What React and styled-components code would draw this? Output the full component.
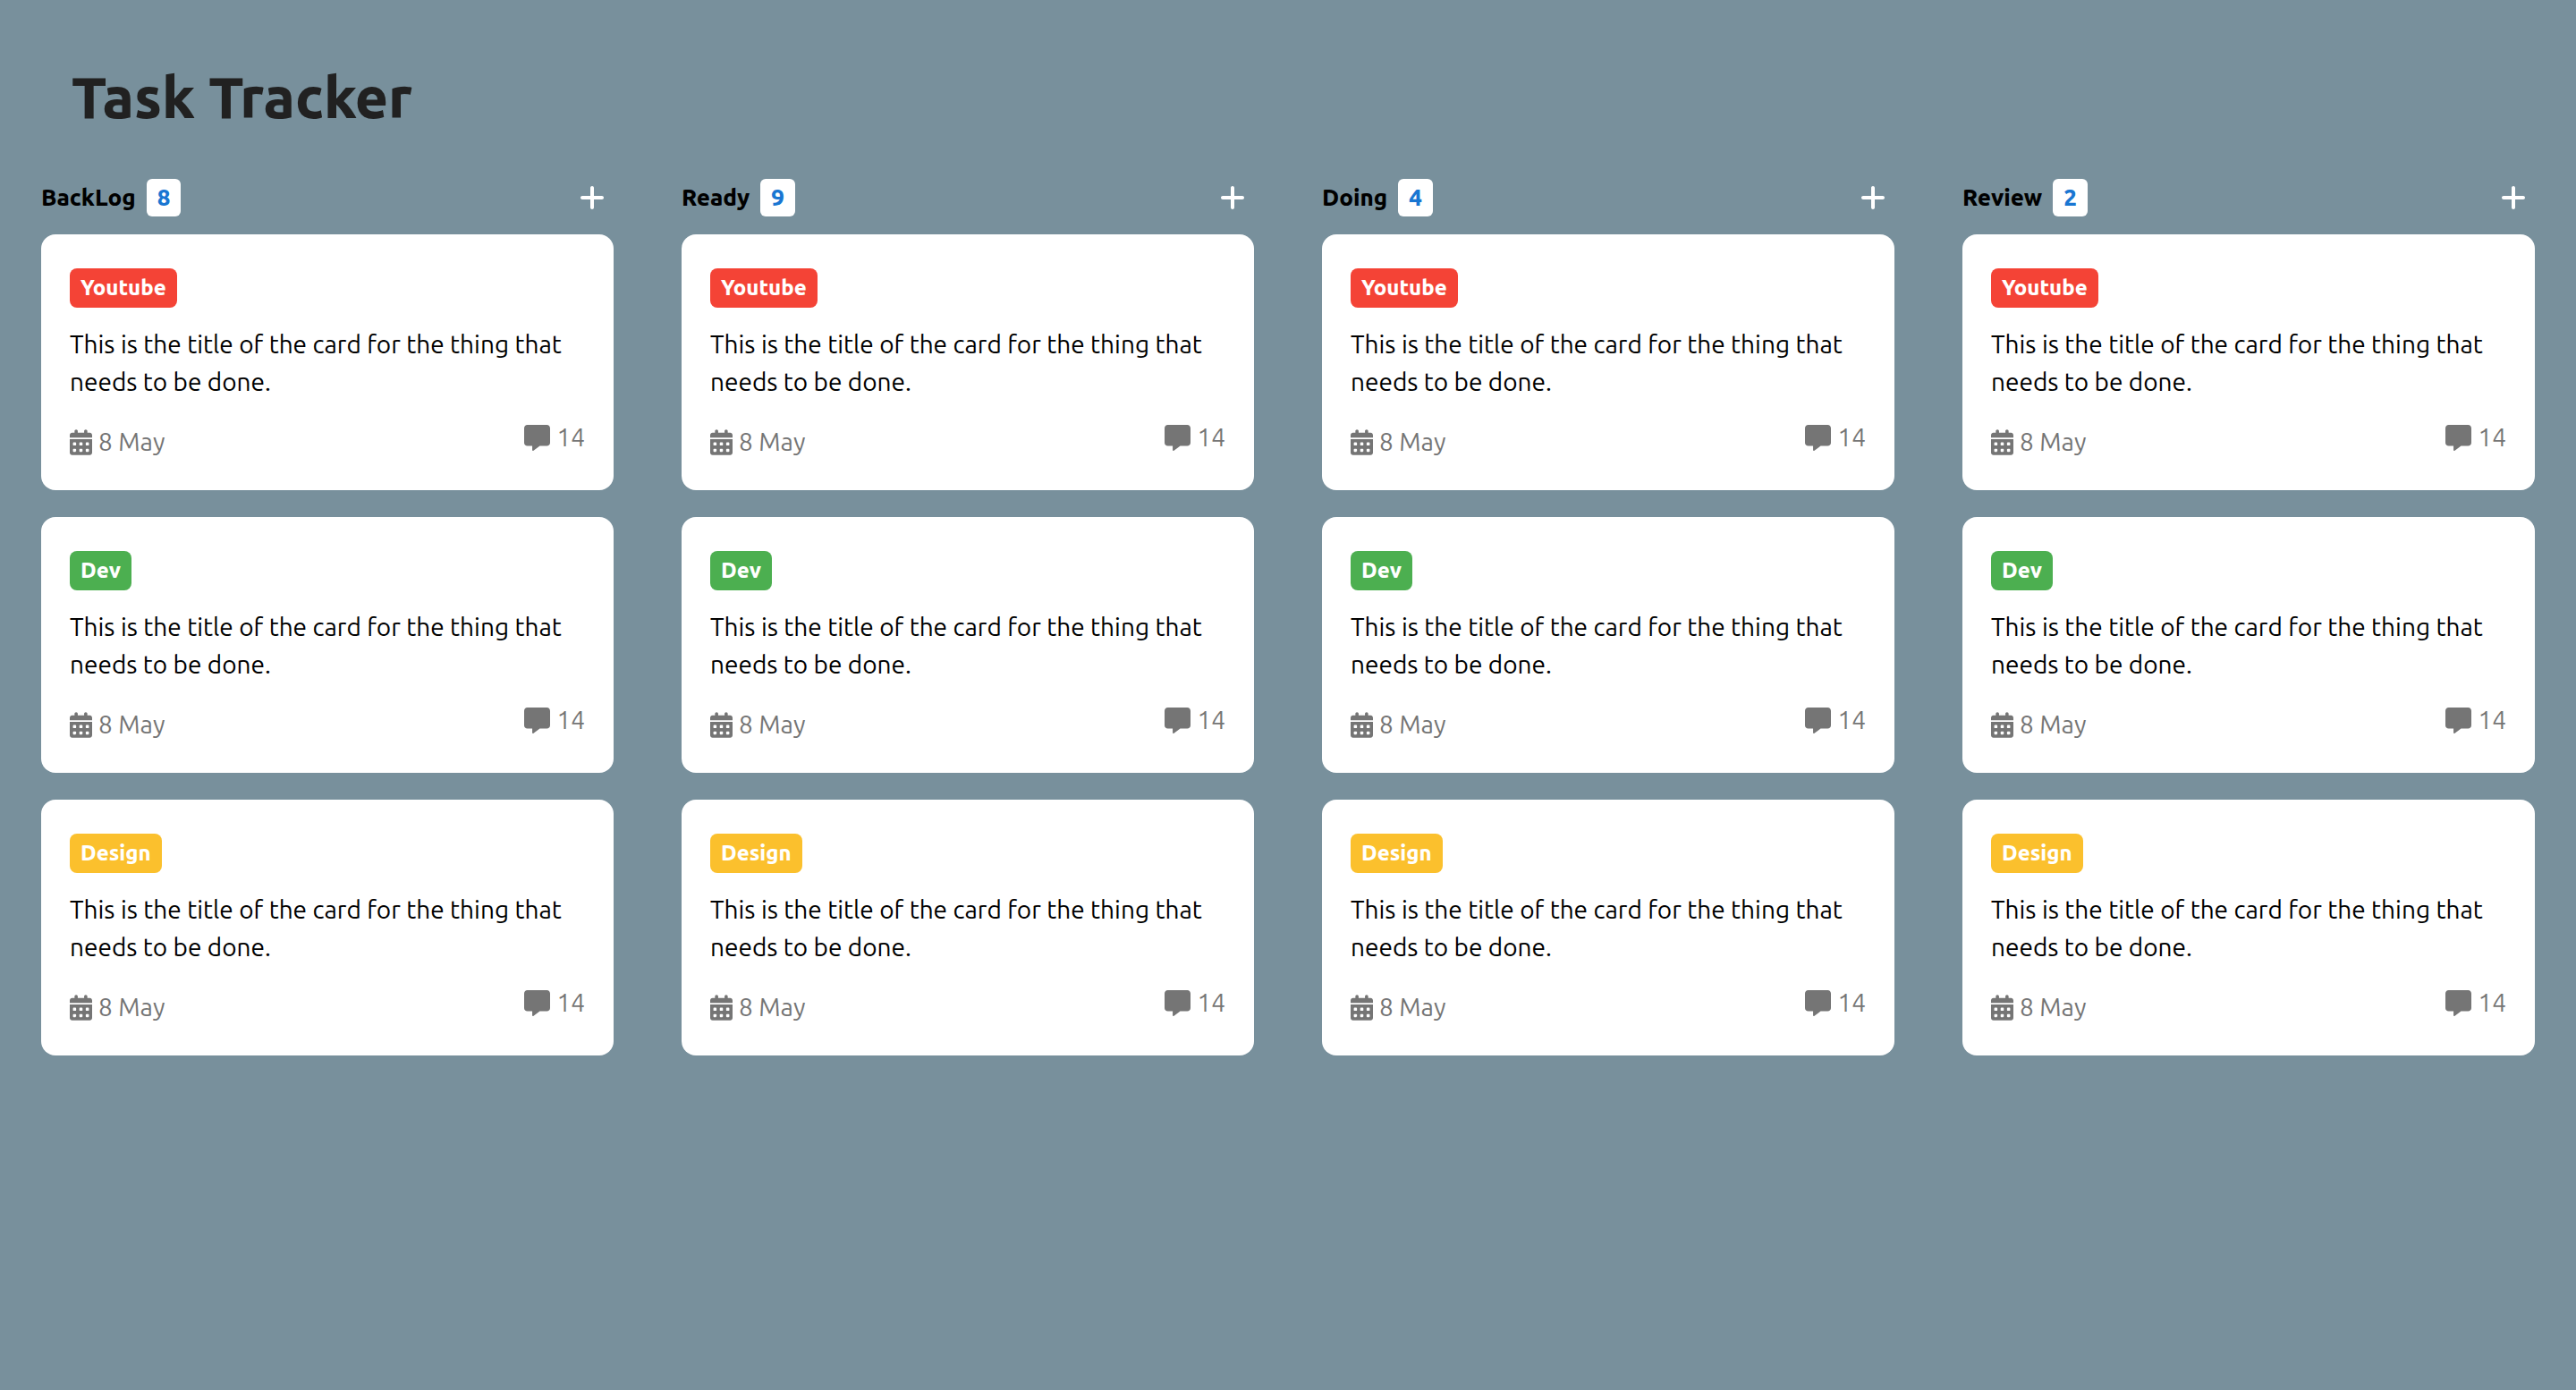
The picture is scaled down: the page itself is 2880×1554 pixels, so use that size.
import React from "react";
import styled, { createGlobalStyle } from "styled-components";
import { FaCalendarDays, FaMessage, FaPlus } from "react-icons/fa6";

const GlobalStyle = createGlobalStyle`
  *, *::before, *::after { box-sizing: border-box; }
  body {
    margin: 0;
    background: #78909c;
    color: #000;
    font-family: Ubuntu, "Noto Sans", "Open Sans", sans-serif;
    font-size: 28px;
    font-weight: 450;
    line-height: 42px;
  }
`;

const Page = styled.main`
  min-height: 100vh;
  padding: 58px 46px;
`;

const Title = styled.h1`
  margin: 0 0 42px;
  padding-left: 34px;
  color: #212121;
  font-size: 64px;
  line-height: 100px;
  font-weight: 800;
`;

const Board = styled.div`
  display: grid;
  grid-template-columns: repeat(4, minmax(0, 1fr));
  gap: 76px;
`;

const Column = styled.section`
  display: flex;
  flex-direction: column;
  gap: 20px;
`;

const ColumnHeader = styled.header`
  display: flex;
  align-items: center;
  gap: 12px;
  padding-right: 8px;
`;

const ColumnName = styled.h2`
  margin: 0;
  font-size: 26px;
  line-height: 42px;
  font-weight: 800;
`;

const Count = styled.span`
  padding: 0 12px;
  border-radius: 6px;
  background: #fff;
  color: #1976d2;
  font-size: 26px;
  font-weight: 800;
`;

const AddButton = styled.button`
  display: flex;
  margin-left: auto;
  padding: 0;
  border: 0;
  background: none;
  color: #fff;
  font-size: 32px;
  cursor: pointer;
`;

const CardList = styled.ul`
  display: flex;
  flex-direction: column;
  gap: 30px;
  margin: 0;
  padding: 0;
  list-style: none;
`;

const Card = styled.li`
  padding: 38px 32px 32px;
  border-radius: 16px;
  background: #fff;
`;

const Tag = styled.span`
  display: block;
  width: fit-content;
  padding: 0 12px;
  border-radius: 8px;
  background: ${({ $color }) => $color};
  color: #fff;
  font-size: 24px;
  line-height: 44px;
  font-weight: 800;
`;

const CardTitle = styled.p`
  margin: 20px 0;
`;

const Meta = styled.div`
  display: flex;
  justify-content: space-between;
  align-items: flex-start;
  min-height: 48px;
  color: #757575;
`;

const MetaItem = styled.span`
  display: flex;
  align-items: center;
  gap: 7px;
  padding-top: ${({ $drop }) => ($drop ? 5 : 0)}px;

  svg {
    width: ${({ $iconWidth }) => $iconWidth}px;
    height: 29px;
  }
`;

const columns = [
  { name: "BackLog", count: 8 },
  { name: "Ready", count: 9 },
  { name: "Doing", count: 4 },
  { name: "Review", count: 2 },
];

const tags = [
  { label: "Youtube", color: "#f44336" },
  { label: "Dev", color: "#4caf50" },
  { label: "Design", color: "#fbc02d" },
];

function TaskCard({ tag }) {
  return (
    <Card>
      <Tag $color={tag.color}>{tag.label}</Tag>
      <CardTitle>
        This is the title of the card for the thing that needs to be done.
      </CardTitle>
      <Meta>
        <MetaItem $drop $iconWidth={25}>
          <FaCalendarDays />
          8 May
        </MetaItem>
        <MetaItem $iconWidth={29}>
          <FaMessage />
          14
        </MetaItem>
      </Meta>
    </Card>
  );
}

export default function App() {
  return (
    <>
      <GlobalStyle />
      <Page>
        <Title>Task Tracker</Title>
        <Board>
          {columns.map((column) => (
            <Column key={column.name}>
              <ColumnHeader>
                <ColumnName>{column.name}</ColumnName>
                <Count>{column.count}</Count>
                <AddButton type="button" aria-label={`Add card to ${column.name}`}>
                  <FaPlus />
                </AddButton>
              </ColumnHeader>
              <CardList>
                {tags.map((tag) => (
                  <TaskCard key={tag.label} tag={tag} />
                ))}
              </CardList>
            </Column>
          ))}
        </Board>
      </Page>
    </>
  );
}
